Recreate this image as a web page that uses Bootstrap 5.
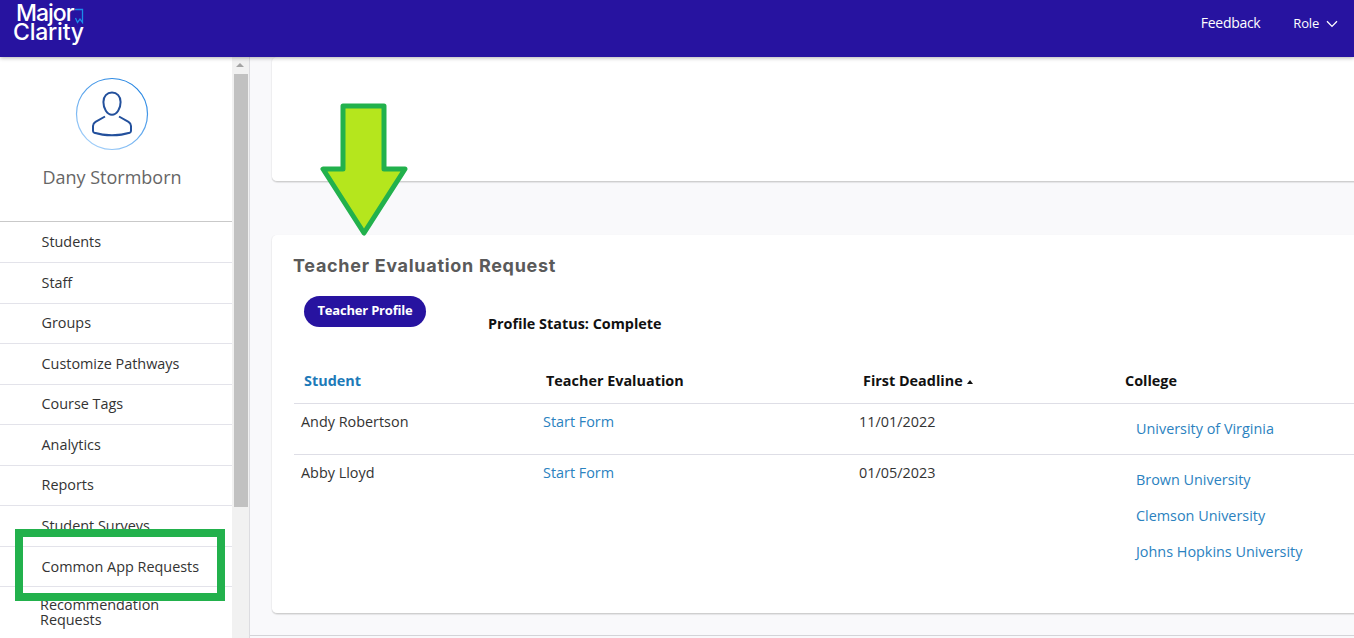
<!DOCTYPE html>
<html lang="en">
<head>
    <meta charset="UTF-8">
    <meta name="viewport" content="width=device-width, initial-scale=1.0">
    <title>Teacher Evaluation Request</title>
    <link rel="stylesheet" href="https://cdn.jsdelivr.net/npm/bootstrap@5.3.0/dist/css/bootstrap.min.css">
    <style>
        html, body {
            height: 100%;
        }
        body {
            font-family: "Open Sans", sans-serif;
            font-size: 14.4px;
            color: #222;
            background: #f9f9fb;
            overflow: hidden;
        }
        .top-bar {
            height: 57px;
            background: #2713a0;
            box-shadow: 0 1px 4px rgba(0, 0, 0, .3);
            padding: 0 16px 12px 13px;
            position: relative;
            z-index: 2;
        }
        .brand-logo {
            width: 72px;
            height: 46px;
            font-family: "Inter", sans-serif;
            font-weight: 500;
            font-size: 23px;
            line-height: 19px;
            color: #fff;
            position: relative;
        }
        .brand-logo span {
            display: block;
        }
        .brand-logo .line-one {
            padding-left: 3px;
            padding-top: 4px;
            letter-spacing: -1px;
        }
        .brand-logo .line-two {
            letter-spacing: -.2px;
        }
        .brand-logo svg {
            position: absolute;
            left: 61px;
            top: 8px;
        }
        .top-link {
            color: #fff;
            font-size: 14px;
            letter-spacing: -.3px;
            text-decoration: none;
        }
        .role-link {
            font-size: 13px;
            letter-spacing: -.2px;
            margin-left: 33px;
            margin-top: 2px;
        }
        .role-chevron {
            margin-left: 7px;
        }
        .page-wrap {
            height: calc(100% - 57px);
        }
        .side-col {
            width: 250px;
            flex: none;
            background: #fff;
            border-right: 1px solid #dcdce0;
            position: relative;
            overflow: hidden;
        }
        .side-inner {
            width: 232px;
        }
        .avatar-wrap {
            height: 165.45px;
            border-bottom: 1px solid #c9c9c9;
            padding: 20px 8px 0 0;
        }
        .avatar-name {
            font-size: 18px;
            color: #666;
            margin-top: 14px;
            line-height: 24px;
        }
        .side-link {
            display: flex;
            align-items: center;
            height: 40.55px;
            padding-left: 41.5px;
            padding-bottom: .5px;
            color: #333;
            font-size: 14.4px;
            text-decoration: none;
            border-bottom: 1px solid #e3e3ea;
        }
        .side-link.two-lines {
            border-bottom: 0;
            line-height: 15px;
            padding-left: 40px;
            padding-bottom: 0;
            height: 50px;
        }
        .scroll-track {
            position: absolute;
            left: 232px;
            top: 0;
            bottom: 0;
            width: 17px;
            background: #f1f1f1;
        }
        .scroll-thumb {
            margin: 17px 1px 0 2px;
            height: 433px;
            background: #c1c1c1;
        }
        .scroll-up {
            position: absolute;
            left: 4px;
            top: 6px;
            width: 0;
            height: 0;
            border-left: 4px solid transparent;
            border-right: 4px solid transparent;
            border-bottom: 4px solid #a3a3a3;
        }
        .main-col {
            flex: 1;
            min-width: 0;
            padding-left: 22px;
            overflow: hidden;
            position: relative;
            border-bottom: 1px solid #d4d4d8;
            margin-bottom: 2px;
        }
        .panel-box {
            width: 1300px;
            background: #fff;
            border-radius: 5px 0 0 5px;
            border-bottom: 1px solid #cfcfcf;
            box-shadow: -1px 0 1px rgba(0, 0, 0, .04), 0 1px 1px rgba(0, 0, 0, .08);
        }
        .panel-top {
            height: 125px;
            margin-bottom: 53px;
        }
        .panel-main {
            height: 379px;
            padding: 18px 0 0 22px;
        }
        .panel-title {
            font-family: "Inter", sans-serif;
            font-weight: 700;
            font-size: 18px;
            line-height: 25px;
            letter-spacing: .7px;
            color: #5a5a5a;
            margin: 0 0 0 -1px;
        }
        .profile-row {
            margin-top: 18px;
            padding-left: 10px;
            height: 75px;
        }
        .btn-profile {
            width: 122px;
            height: 31px;
            padding: 0 0 2px;
            border: 0;
            border-radius: 16px;
            background: #2713a0;
            color: #fff;
            font-size: 13px;
            font-weight: 700;
            letter-spacing: -.2px;
        }
        .profile-status {
            margin-left: 62px;
            margin-top: 18px;
            font-weight: 700;
            font-size: 14.4px;
            color: #111;
            line-height: 20px;
        }
        .eval-table {
            width: 1100px;
            table-layout: fixed;
            margin: 0;
            font-size: 14.4px;
        }
        .eval-table th {
            padding: 0 0 12px 10px;
            height: 32px;
            line-height: 20px;
            font-weight: 700;
            color: #111;
            border-bottom: 1px solid #dedee6;
        }
        .eval-table td {
            padding: 8px 0 0 7px;
            height: 51px;
            line-height: 20px;
            color: #333;
            vertical-align: top;
            border-bottom: 1px solid #dedee6;
        }
        .eval-table td.date-cell {
            padding-left: 6px;
        }
        .eval-table tr:last-child td {
            border-bottom: 0;
        }
        .eval-table a {
            color: #2b82c0;
            text-decoration: none;
        }
        .eval-table th a {
            font-weight: 700;
            color: #1d7ab8;
        }
        .college-list {
            padding: 15px 0 0 14px;
        }
        .college-list a {
            display: block;
            margin-bottom: 16px;
        }
        .college-list a:last-child {
            margin-bottom: 0;
        }
        .sort-mark {
            display: inline-block;
            width: 0;
            height: 0;
            margin-left: 4px;
            vertical-align: 2px;
            border-left: 3px solid transparent;
            border-right: 3px solid transparent;
            border-bottom: 4px solid #111;
        }
        .mark-box {
            position: absolute;
            left: 15px;
            top: 529px;
            width: 210px;
            height: 72px;
            border: 8px solid #22b14c;
            z-index: 3;
        }
        .mark-arrow {
            position: absolute;
            left: 318px;
            top: 102px;
            z-index: 3;
        }
    </style>
</head>
<body>

<!-- Top bar -->
<nav class="top-bar d-flex justify-content-between align-items-center">
    <div class="brand-logo align-self-start">
        <span class="line-one">Major</span>
        <span class="line-two">Clarity</span>
        <svg width="10" height="16" viewBox="0 0 10 16" fill="none" stroke="#1b8be8" stroke-width="1.3"><path d="M1 1.500H8.500V14.500L6 11 3.500 14.500 1.500 10"/></svg>
    </div>
    <div class="d-flex align-items-center">
        <a class="top-link" href="#">Feedback</a>
        <a class="top-link role-link d-flex align-items-center" href="#">
            Role
            <svg class="role-chevron" width="12" height="8" viewBox="0 0 12 8" fill="none" stroke="#fff" stroke-width="1.3"><path d="M1 1.200 6 6.400 11 1.200"/></svg>
        </a>
    </div>
</nav>

<div class="page-wrap d-flex">
    <!-- Sidebar -->
    <aside class="side-col">
        <div class="side-inner">
            <div class="avatar-wrap text-center">
                <svg width="74" height="74" viewBox="0 0 74 74" fill="none">
                    <defs>
                        <linearGradient id="ringGrad" x1="0.8" y1="0" x2="0.2" y2="1">
                            <stop offset="0" stop-color="#1b7fe0"/>
                            <stop offset="1" stop-color="#a8d2fa"/>
                        </linearGradient>
                    </defs>
                    <circle cx="37" cy="37" r="35.500" stroke="url(#ringGrad)" stroke-width="1.200"/>
                    <g stroke="#23509c" stroke-width="2">
                        <path d="M37 15.500c-5 0-8.600 3.700-8.600 9.400 0 6.500 3.600 12.800 8.600 12.800s8.600-6.300 8.600-12.800c0-5.700-3.600-9.400-8.600-9.400z"/>
                        <path d="M30 39.500l-9.500 5.300c-1.500.9-2.500 2.300-2.500 4.200v5c0 .9.500 1.400 1.300 1.700 5.500 1.800 11.500 2.500 17.700 2.500s12.200-.7 17.700-2.500c.8-.3 1.300-.8 1.300-1.700v-5c0-1.900-1-3.300-2.500-4.200L44 39.500"/>
                    </g>
                </svg>
                <div class="avatar-name">Dany Stormborn</div>
            </div>
            <a class="side-link" href="#">Students</a>
            <a class="side-link" href="#">Staff</a>
            <a class="side-link" href="#">Groups</a>
            <a class="side-link" href="#">Customize Pathways</a>
            <a class="side-link" href="#">Course Tags</a>
            <a class="side-link" href="#">Analytics</a>
            <a class="side-link" href="#">Reports</a>
            <a class="side-link" href="#">Student Surveys</a>
            <a class="side-link" href="#">Common App Requests</a>
            <a class="side-link two-lines" href="#">Recommendation<br>Requests</a>
        </div>
        <div class="scroll-track">
            <div class="scroll-up"></div>
            <div class="scroll-thumb"></div>
        </div>
    </aside>

    <!-- Main content -->
    <main class="main-col">
        <div class="panel-box panel-top"></div>
        <div class="panel-box panel-main">
            <h5 class="panel-title">Teacher Evaluation Request</h5>
            <div class="profile-row d-flex align-items-start">
                <button class="btn btn-profile" type="button">Teacher Profile</button>
                <div class="profile-status">Profile Status: Complete</div>
            </div>
            <table class="table eval-table">
                <colgroup>
                    <col style="width:242px">
                    <col style="width:317px">
                    <col style="width:262px">
                    <col>
                </colgroup>
                <thead>
                    <tr>
                        <th><a href="#">Student</a></th>
                        <th>Teacher Evaluation</th>
                        <th>First Deadline<span class="sort-mark"></span></th>
                        <th>College</th>
                    </tr>
                </thead>
                <tbody>
                    <tr>
                        <td>Andy Robertson</td>
                        <td><a href="#">Start Form</a></td>
                        <td class="date-cell">11/01/2022</td>
                        <td class="py-0"><div class="college-list"><a href="#">University of Virginia</a></div></td>
                    </tr>
                    <tr>
                        <td>Abby Lloyd</td>
                        <td><a href="#">Start Form</a></td>
                        <td class="date-cell">01/05/2023</td>
                        <td class="py-0">
                            <div class="college-list">
                                <a href="#">Brown University</a>
                                <a href="#">Clemson University</a>
                                <a href="#">Johns Hopkins University</a>
                            </div>
                        </td>
                    </tr>
                </tbody>
            </table>
        </div>
    </main>
</div>

<!-- Annotations drawn on top of the screenshot -->
<div class="mark-box"></div>
<svg class="mark-arrow" width="92" height="136" viewBox="0 0 92 136">
    <path d="M25 4H66V67H87L46 131 5 67H25z" fill="#b5e61d" stroke="#22b14c" stroke-width="5" stroke-linejoin="round"/>
</svg>

<script src="https://cdn.jsdelivr.net/npm/bootstrap@5.3.0/dist/js/bootstrap.bundle.min.js"></script>
</body>
</html>
